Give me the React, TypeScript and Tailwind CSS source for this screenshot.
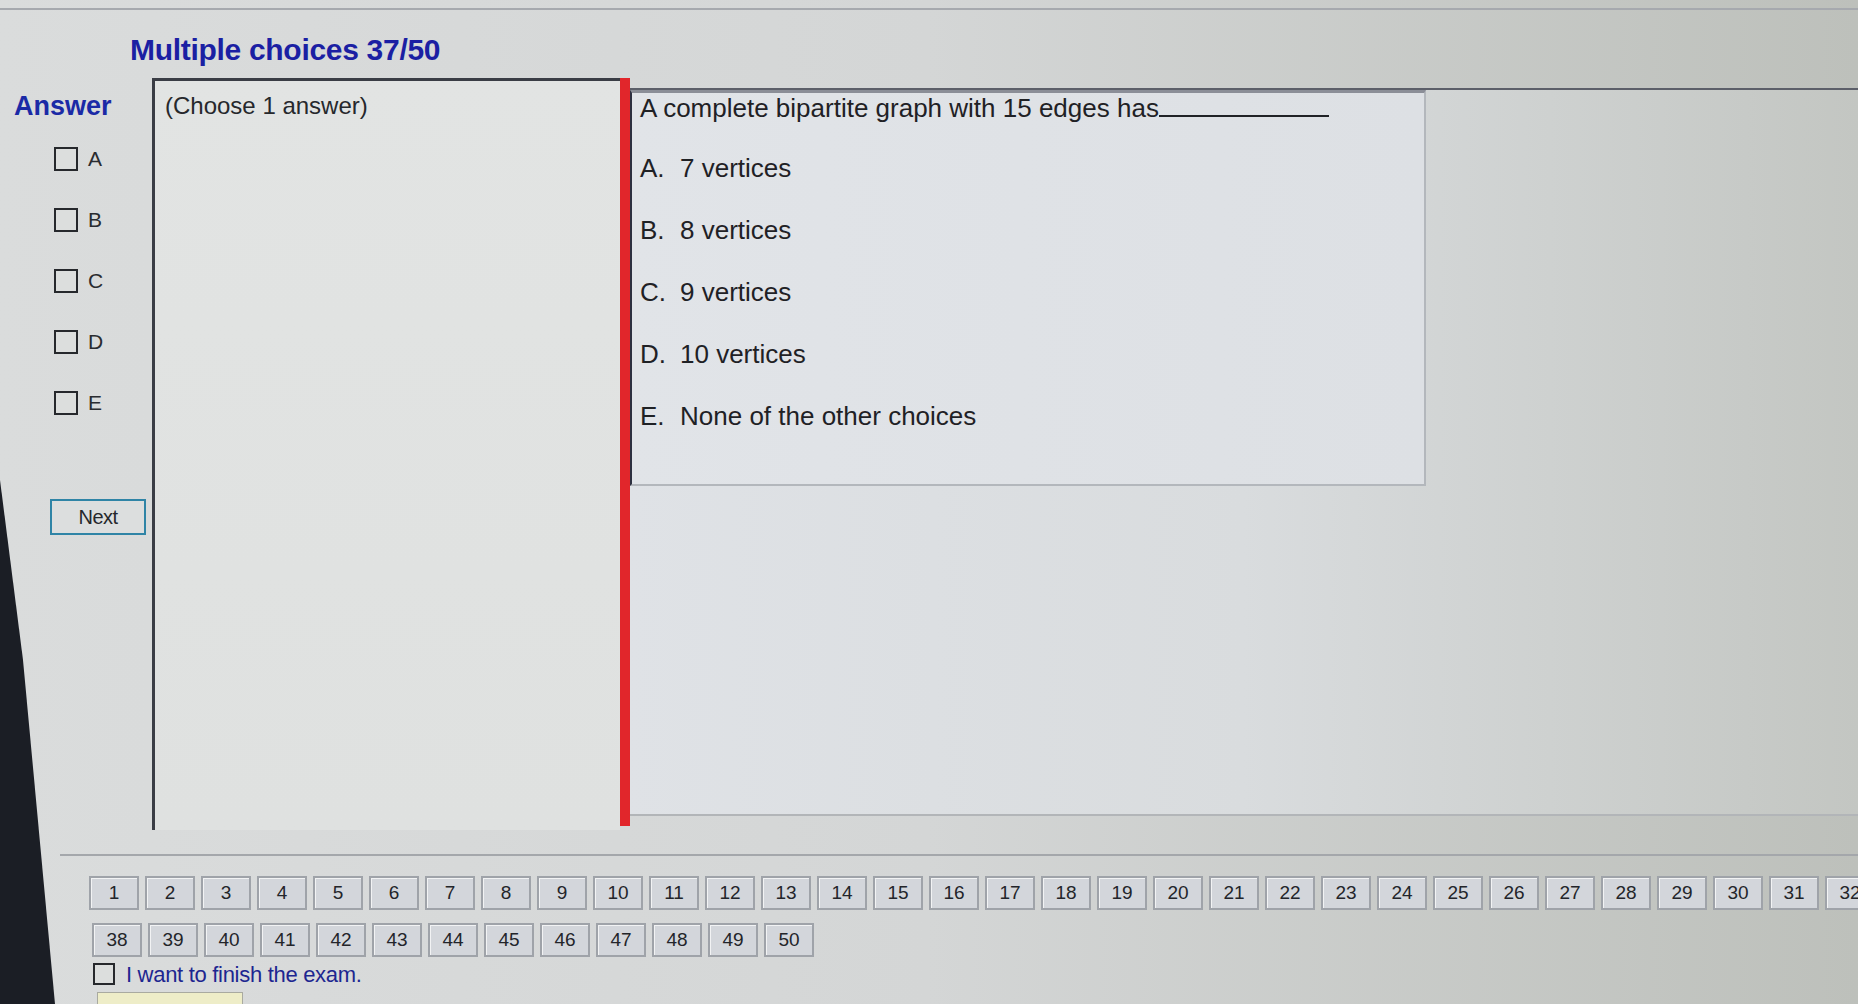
import React from 'react';

const choices = ['A', 'B', 'C', 'D', 'E'];

const options = [
  { key: 'A.', text: '7 vertices' },
  { key: 'B.', text: '8 vertices' },
  { key: 'C.', text: '9 vertices' },
  { key: 'D.', text: '10 vertices' },
  { key: 'E.', text: 'None of the other choices' },
];

// row 1 runs off the right edge of the screen, as in the photo
const firstRow = Array.from({ length: 32 }, (_, i) => i + 1);
const secondRow = Array.from({ length: 13 }, (_, i) => i + 38);

function Box({ size = 'w-[24px] h-[24px]' }: { size?: string }) {
  return <span className={`${size} shrink-0 border-2 border-[#26282c] bg-[#dcdedd]`} />;
}

function QuestionButton({ n }: { n: number }) {
  return (
    <div className="w-[50px] h-[34px] shrink-0 flex items-center justify-center bg-[#d3d6db] border-2 border-[#9fa3a9] shadow-[inset_1px_1px_0_#f2f3f4] text-[19px] text-[#23252a]">
      {n}
    </div>
  );
}

export default function App() {
  return (
    <div
      className="relative w-[1858px] h-[1004px] overflow-hidden bg-gradient-to-r from-[#dadcdc] via-[#d4d6d6] to-[#bdc0bb]"
      style={{ fontFamily: '"Liberation Sans", Arial, sans-serif' }}
    >
      {/* top window edge */}
      <div className="h-[10px] border-b-2 border-[#a6a9ae]" />

      {/* title */}
      <div className="h-[68px] pl-[130px] pt-[10px] flex items-center">
        <h1 className="text-[30px] font-bold text-[#1b1fa3] tracking-[-0.3px]">Multiple choices 37/50</h1>
      </div>

      {/* main frame */}
      <div className="flex h-[778px] border-b-2 border-[#a4a7ab] ml-[60px]">
        {/* answer column */}
        <div className="w-[98px] shrink-0 flex flex-col -ml-[60px] pl-[14px]">
          <div className="mt-[12px] h-[32px] leading-[32px] text-[27px] font-bold text-[#1b2aa6]">Answer</div>
          <div className="mt-[6px] flex flex-col pl-[40px]">
            {choices.map((c) => (
              <label key={c} className="h-[61px] flex items-center gap-[10px] text-[21px] text-[#2a2c30]">
                <Box />
                {c}
              </label>
            ))}
          </div>
          <button className="mt-[66px] ml-[36px] w-[96px] h-[36px] shrink-0 border-2 border-[#2f84a6] bg-[#dcdede] text-[20px] text-[#25272b] tracking-[-0.5px]">
            Next
          </button>
        </div>

        {/* choose panel */}
        <div className="ml-[54px] w-[468px] h-[752px] shrink-0 border-l-[3px] border-t-[3px] border-[#3a3d45] bg-gradient-to-b from-[#e2e4e3] to-[#dfe1e0] pl-[10px] pt-[10px]">
          <p className="text-[24px] leading-[30px] text-[#26282c]">(Choose 1 answer)</p>
        </div>

        {/* red separator */}
        <div className="w-[10px] h-[748px] shrink-0 bg-[#e1262b]" />

        {/* question area */}
        <div className="flex-1 mt-[10px] h-[728px] border-t-2 border-b-2 border-t-[#5c5f69] border-b-[#b2b5b8] bg-gradient-to-r from-[#dfe2e6] via-[#d9dcde] to-[#c3c6c2]">
          <div className="w-[796px] h-[396px] border-t-[3px] border-l-[2px] border-r-2 border-b-2 border-t-[#8b8e97] border-l-[#2d3040] border-r-[#b3b7bc] border-b-[#b3b7bc] bg-gradient-to-r from-[#e1e4e8] to-[#dde0e4] pl-[8px]">
            <p className="text-[26px] leading-[30px] text-[#1f2125] whitespace-nowrap">
              A complete bipartite graph with 15 edges has
              <span className="inline-block w-[170px] h-[20px] border-b-2 border-[#202226] align-baseline" />
            </p>
            <div className="mt-[14px] flex flex-col">
              {options.map((o) => (
                <div key={o.key} className="h-[62px] flex items-center text-[26px] text-[#1f2125]">
                  <span className="w-[40px] shrink-0">{o.key}</span>
                  <span>{o.text}</span>
                </div>
              ))}
            </div>
          </div>
        </div>
      </div>

      {/* question navigation */}
      <div className="mt-[20px] pl-[89px] flex gap-[6px]">
        {firstRow.map((n) => (
          <QuestionButton key={n} n={n} />
        ))}
      </div>
      <div className="mt-[13px] pl-[92px] flex gap-[6px]">
        {secondRow.map((n) => (
          <QuestionButton key={n} n={n} />
        ))}
      </div>

      <label className="mt-[6px] pl-[93px] h-[22px] flex items-center gap-[11px] text-[22px] text-[#1d2690] tracking-[-0.3px]">
        <Box size="w-[22px] h-[22px]" />
        I want to finish the exam.
      </label>

      <div className="mt-[7px] ml-[97px] w-[146px] h-[30px] bg-[#eeedc8] border border-[#a9aaa0]" />

      {/* monitor bezel */}
      <div className="absolute left-0 top-0 w-[60px] h-full bg-[#1b1e25] [clip-path:polygon(0_480px,23px_660px,55px_1004px,0_1004px)]" />
    </div>
  );
}
